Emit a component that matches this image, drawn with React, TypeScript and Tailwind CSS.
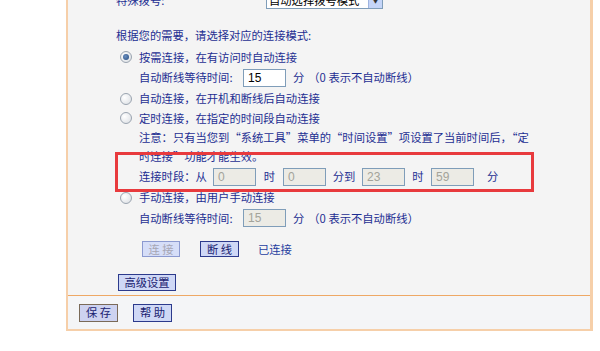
const TEXT = 'text-[#1d2e92]';

function Radio({ checked }: { checked?: boolean }) {
  return (
    <span className="w-[12px] h-[12px] rounded-full border border-[#9aa4b0] bg-[radial-gradient(circle_at_35%_35%,#ffffff,#d9dde2)] flex items-center justify-center shrink-0">
      {checked && <span className="w-[6px] h-[6px] rounded-full bg-[radial-gradient(circle_at_40%_40%,#6a8fc0,#24497e)]" />}
    </span>
  );
}

function Field({ value, disabled }: { value: string; disabled?: boolean }) {
  return (
    <span
      className={
        'w-[43px] h-[18px] border border-[#7f9db9] pl-[4px] flex items-center font-["Liberation_Sans",sans-serif] text-[12px] ' +
        (disabled ? 'bg-[#ecebe5] text-[#a3a39a]' : 'bg-white text-black')
      }
    >
      {value}
    </span>
  );
}

function Btn({ label, disabled, main, w }: { label: string; disabled?: boolean; main?: boolean; w: string }) {
  return (
    <span
      className={
        'h-full flex items-center justify-center border ' + w + ' ' +
        (disabled
          ? 'border-[#8c9ad0] bg-[#d6def8] text-[#a6a6b4]'
          : main
            ? 'border-[#7a6a58] bg-[#cdd2f0] text-[#1a2270]'
            : 'border-[#2c3a8c] bg-[#cfd8f6] text-[#1a2270]')
      }
    >
      {label}
    </span>
  );
}

export default function App() {
  return (
    <div className={'w-[600px] h-[351px] bg-white relative overflow-hidden font-["Noto_Sans_CJK_SC",sans-serif] text-[11.3px] ' + TEXT}>
      <div className="ml-[66px] w-[527px] h-[331px] border-l-2 border-r-[3px] border-b-2 border-[#f6cfa9] bg-[#f4f4f4] flex flex-col">
        <div className="h-[305px] shrink-0 flex flex-col pl-[48px] -mt-[10px]">
          <div className="h-[20px] flex items-center">
            <span className="w-[150px]">特殊拨号:</span>
            <span className="h-[18px] w-[117px] border border-[#7f9db9] bg-white flex items-center text-black">
              <span className="flex-1 pl-[2px]">自动选择拨号模式</span>
              <span className="w-[14px] h-full bg-[#c5d5f8] border-l border-[#9fb4e0] flex items-center justify-center text-[7px] text-[#333]">▼</span>
            </span>
          </div>
          <div className="h-[20px] mt-[15px] flex items-center">根据您的需要，请选择对应的连接模式:</div>
          <div className="h-[20px] mt-[2px] flex items-center pl-[4px] gap-[7px]">
            <Radio checked />
            <span>按需连接，在有访问时自动连接</span>
          </div>
          <div className="h-[21px] flex items-center pl-[23px]">
            <span className="w-[104px]">自动断线等待时间:</span>
            <Field value="15" />
            <span className="ml-[7px]">分</span>
            <span className="ml-[4px]">（0 表示不自动断线）</span>
          </div>
          <div className="h-[21px] flex items-center pl-[4px] gap-[7px]">
            <Radio />
            <span>自动连接，在开机和断线后自动连接</span>
          </div>
          <div className="h-[18px] flex items-center pl-[4px] gap-[7px]">
            <Radio />
            <span>定时连接，在指定的时间段自动连接</span>
          </div>
          <div className="h-[20px] flex items-center pl-[23px]">注意：只有当您到“系统工具”菜单的“时间设置”项设置了当前时间后，“定</div>
          <div className="h-[19px] flex items-center pl-[23px]">时连接”功能才能生效。</div>
          <div className="h-[21px] flex items-center pl-[23px]">
            <span className="w-[74px]">连接时段：从</span>
            <Field value="0" disabled />
            <span className="w-[27px] text-center">时</span>
            <Field value="0" disabled />
            <span className="w-[36px] text-center">分到</span>
            <Field value="23" disabled />
            <span className="w-[26px] text-center">时</span>
            <Field value="59" disabled />
            <span className="ml-[13px]">分</span>
          </div>
          <div className="h-[21px] flex items-center pl-[4px] gap-[7px]">
            <Radio />
            <span>手动连接，由用户手动连接</span>
          </div>
          <div className="h-[20px] flex items-center pl-[23px]">
            <span className="w-[104px]">自动断线等待时间:</span>
            <Field value="15" disabled />
            <span className="ml-[7px]">分</span>
            <span className="ml-[4px]">（0 表示不自动断线）</span>
          </div>
          <div className="h-[16px] mt-[13px] flex items-center pl-[26px]">
            <Btn label="连 接" disabled w="w-[38px]" />
            <span className="ml-[20px] h-full flex">
              <Btn label="断 线" w="w-[39px]" />
            </span>
            <span className="ml-[19px] text-[#1f3ea0]">已连接</span>
          </div>
          <div className="h-[17px] mt-[17px] flex pl-[2px]">
            <Btn label="高级设置" w="w-[58px]" />
          </div>
        </div>
        <div className="flex-1 border-t border-[#eea865] bg-[#f4f5f7] flex items-center pl-[11px] gap-[15px]">
          <div className="h-[18px] flex">
            <Btn label="保 存" main w="w-[39px]" />
          </div>
          <div className="h-[18px] flex">
            <Btn label="帮 助" w="w-[39px]" />
          </div>
        </div>
      </div>
      <div className="absolute left-[115px] top-[152px] w-[419px] h-[40px] border-[3px] border-[#e83a3d]" />
    </div>
  );
}
